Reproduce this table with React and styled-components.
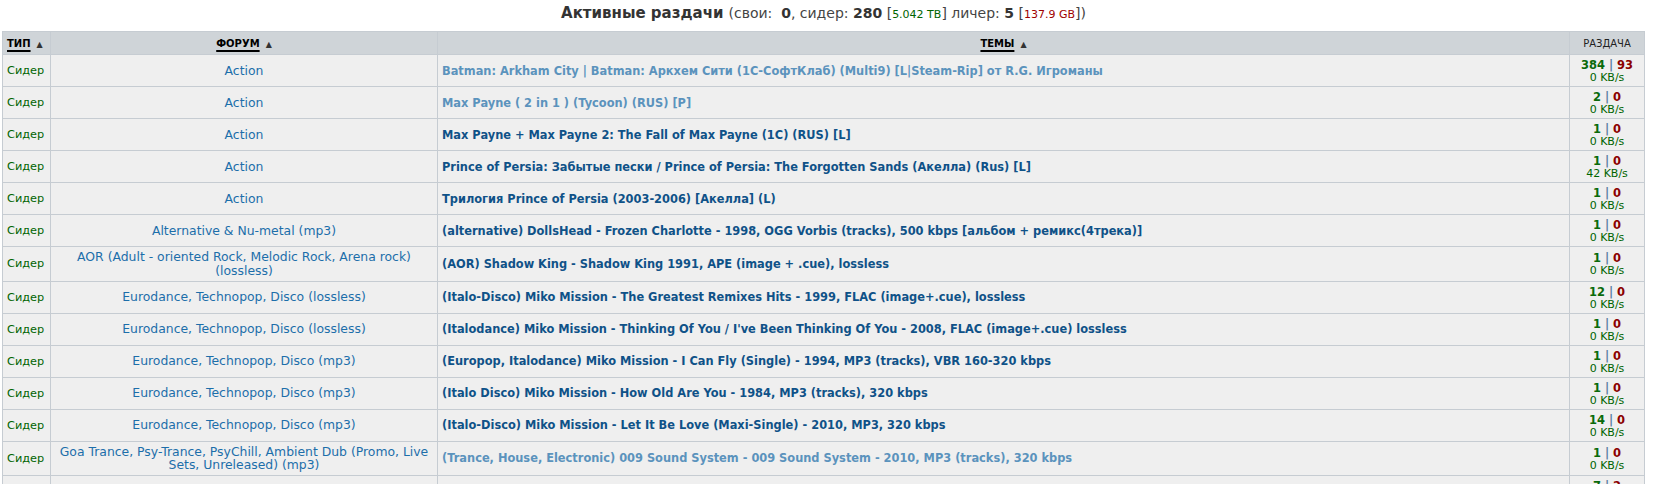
import React from 'react';
import styled, { createGlobalStyle } from 'styled-components';

const GlobalStyle = createGlobalStyle`
  body {
    margin: 0;
    background: #ffffff;
    font-family: 'DejaVu Sans', Verdana, sans-serif;
    font-size: 11px;
    color: #000;
  }
`;

const Page = styled.div`
  display: flex;
  flex-direction: column;
  padding: 0 10px 0 2px;
`;

const Title = styled.div`
  height: 31px;
  box-sizing: border-box;
  padding-top: 4px;
  display: flex;
  align-items: flex-start;
  justify-content: center;
  font-size: 14px;
  line-height: 18px;
  color: #444;
  white-space: pre;
`;

const TitleMain = styled.b`
  font-size: 15px;
  color: #333;
  margin-right: 5px;
`;

const Num = styled.b`
  color: #333;
`;

const Size = styled.span`
  font-size: 11px;
  color: ${(p) => (p.$red ? '#a00000' : '#006400')};
`;

const Table = styled.table`
  width: 100%;
  border-collapse: collapse;
  border: 1px solid #c6ccd2;
`;

const Th = styled.th`
  background: #cfd4d8;
  border: 1px solid #c6ccd2;
  height: 22px;
  padding: 0 4px;
  font-size: 10px;
  font-weight: ${(p) => (p.$plain ? 'normal' : 'bold')};
  color: #222;
  text-align: ${(p) => p.$align || 'center'};
  width: ${(p) => p.$w || 'auto'};
  white-space: nowrap;
`;

const SortLink = styled.span`
  text-decoration: underline;
  text-decoration-thickness: 2px;
  text-underline-offset: 3px;
  color: #000;
`;

const Arrow = styled.span`
  font-size: 8px;
  color: #333;
  margin-left: 6px;
  font-weight: normal;
`;

const Td = styled.td`
  background: #efefef;
  border: 1px solid #c6ccd2;
  padding: 3px 4px;
  text-align: ${(p) => p.$align || 'left'};
  vertical-align: middle;
`;

const Type = styled.span`
  font-size: 11.3px;
  color: #006400;
`;

const ForumLink = styled.span`
  display: inline-block;
  font-size: 12.4px;
  line-height: 13.5px;
  color: #1c6eaa;
`;

const TopicLink = styled.span`
  font-size: 11.4px;
  font-weight: bold;
  color: ${(p) => (p.$visited ? '#5b93bd' : '#0f5288')};
`;

const Stats = styled.div`
  display: flex;
  flex-direction: column;
  align-items: center;
  padding-top: 1px;
`;

const Peers = styled.div`
  font-size: 11.5px;
  font-weight: bold;
  line-height: 13px;
  color: #5a7ea0;
`;

const Seeds = styled.span`
  color: #0a6a0a;
`;

const Leech = styled.span`
  color: #8b0000;
`;

const Speed = styled.div`
  font-size: 11px;
  line-height: 11px;
  color: #006400;
`;

const rows = [
  { forum: 'Action', topic: 'Batman: Arkham City | Batman: Аркхем Сити (1С-СофтКлаб) (Multi9) [L|Steam-Rip] от R.G. Игроманы', visited: true, s: 384, l: 93, speed: '0 KB/s' },
  { forum: 'Action', topic: 'Max Payne ( 2 in 1 ) (Tycoon) (RUS) [P]', visited: true, s: 2, l: 0, speed: '0 KB/s' },
  { forum: 'Action', topic: 'Max Payne + Max Payne 2: The Fall of Max Payne (1C) (RUS) [L]', s: 1, l: 0, speed: '0 KB/s' },
  { forum: 'Action', topic: 'Prince of Persia: Забытые пески / Prince of Persia: The Forgotten Sands (Акелла) (Rus) [L]', s: 1, l: 0, speed: '42 KB/s' },
  { forum: 'Action', topic: 'Трилогия Prince of Persia (2003-2006) [Акелла] (L)', s: 1, l: 0, speed: '0 KB/s' },
  { forum: 'Alternative & Nu-metal (mp3)', topic: '(alternative) DollsHead - Frozen Charlotte - 1998, OGG Vorbis (tracks), 500 kbps [альбом + ремикс(4трека)]', s: 1, l: 0, speed: '0 KB/s' },
  { forum: 'AOR (Adult - oriented Rock, Melodic Rock, Arena rock) (lossless)', topic: '(AOR) Shadow King - Shadow King 1991, APE (image + .cue), lossless', s: 1, l: 0, speed: '0 KB/s' },
  { forum: 'Eurodance, Technopop, Disco (lossless)', topic: '(Italo-Disco) Miko Mission - The Greatest Remixes Hits - 1999, FLAC (image+.cue), lossless', s: 12, l: 0, speed: '0 KB/s' },
  { forum: 'Eurodance, Technopop, Disco (lossless)', topic: "(Italodance) Miko Mission - Thinking Of You / I've Been Thinking Of You - 2008, FLAC (image+.cue) lossless", s: 1, l: 0, speed: '0 KB/s' },
  { forum: 'Eurodance, Technopop, Disco (mp3)', topic: '(Europop, Italodance) Miko Mission - I Can Fly (Single) - 1994, MP3 (tracks), VBR 160-320 kbps', s: 1, l: 0, speed: '0 KB/s' },
  { forum: 'Eurodance, Technopop, Disco (mp3)', topic: '(Italo Disco) Miko Mission - How Old Are You - 1984, MP3 (tracks), 320 kbps', s: 1, l: 0, speed: '0 KB/s' },
  { forum: 'Eurodance, Technopop, Disco (mp3)', topic: '(Italo-Disco) Miko Mission - Let It Be Love (Maxi-Single) - 2010, MP3, 320 kbps', s: 14, l: 0, speed: '0 KB/s' },
  { forum: 'Goa Trance, Psy-Trance, PsyChill, Ambient Dub (Promo, Live Sets, Unreleased) (mp3)', topic: '(Trance, House, Electronic) 009 Sound System - 009 Sound System - 2010, MP3 (tracks), 320 kbps', visited: true, s: 1, l: 0, speed: '0 KB/s' },
  { forum: 'Goa Trance, Psy-Trance, PsyChill (mp3)', topic: '(Psytrance) Various Artists - Psychedelic Compilation - 2010, MP3, 320 kbps', s: 7, l: 2, speed: '0 KB/s' },
];

export default function App() {
  return (
    <>
      <GlobalStyle />
      <Page>
        <Title>
          <TitleMain>Активные раздачи</TitleMain>
          <span>
            (свои:  <Num>0</Num>, сидер: <Num>280</Num> [<Size>5.042 TB</Size>] личер: <Num>5</Num> [<Size $red>137.9 GB</Size>])
          </span>
        </Title>
        <Table>
          <thead>
            <tr>
              <Th $w="39px" $align="left"><SortLink>ТИП</SortLink><Arrow>▲</Arrow></Th>
              <Th $w="378px"><SortLink>ФОРУМ</SortLink><Arrow>▲</Arrow></Th>
              <Th><SortLink>ТЕМЫ</SortLink><Arrow>▲</Arrow></Th>
              <Th $w="66px" $plain>РАЗДАЧА</Th>
            </tr>
          </thead>
          <tbody>
            {rows.map((r, i) => (
              <tr key={i}>
                <Td><Type>Сидер</Type></Td>
                <Td $align="center"><ForumLink>{r.forum}</ForumLink></Td>
                <Td><TopicLink $visited={r.visited}>{r.topic}</TopicLink></Td>
                <Td $align="center">
                  <Stats>
                    <Peers><Seeds>{r.s}</Seeds> | <Leech>{r.l}</Leech></Peers>
                    <Speed>{r.speed}</Speed>
                  </Stats>
                </Td>
              </tr>
            ))}
          </tbody>
        </Table>
      </Page>
    </>
  );
}
